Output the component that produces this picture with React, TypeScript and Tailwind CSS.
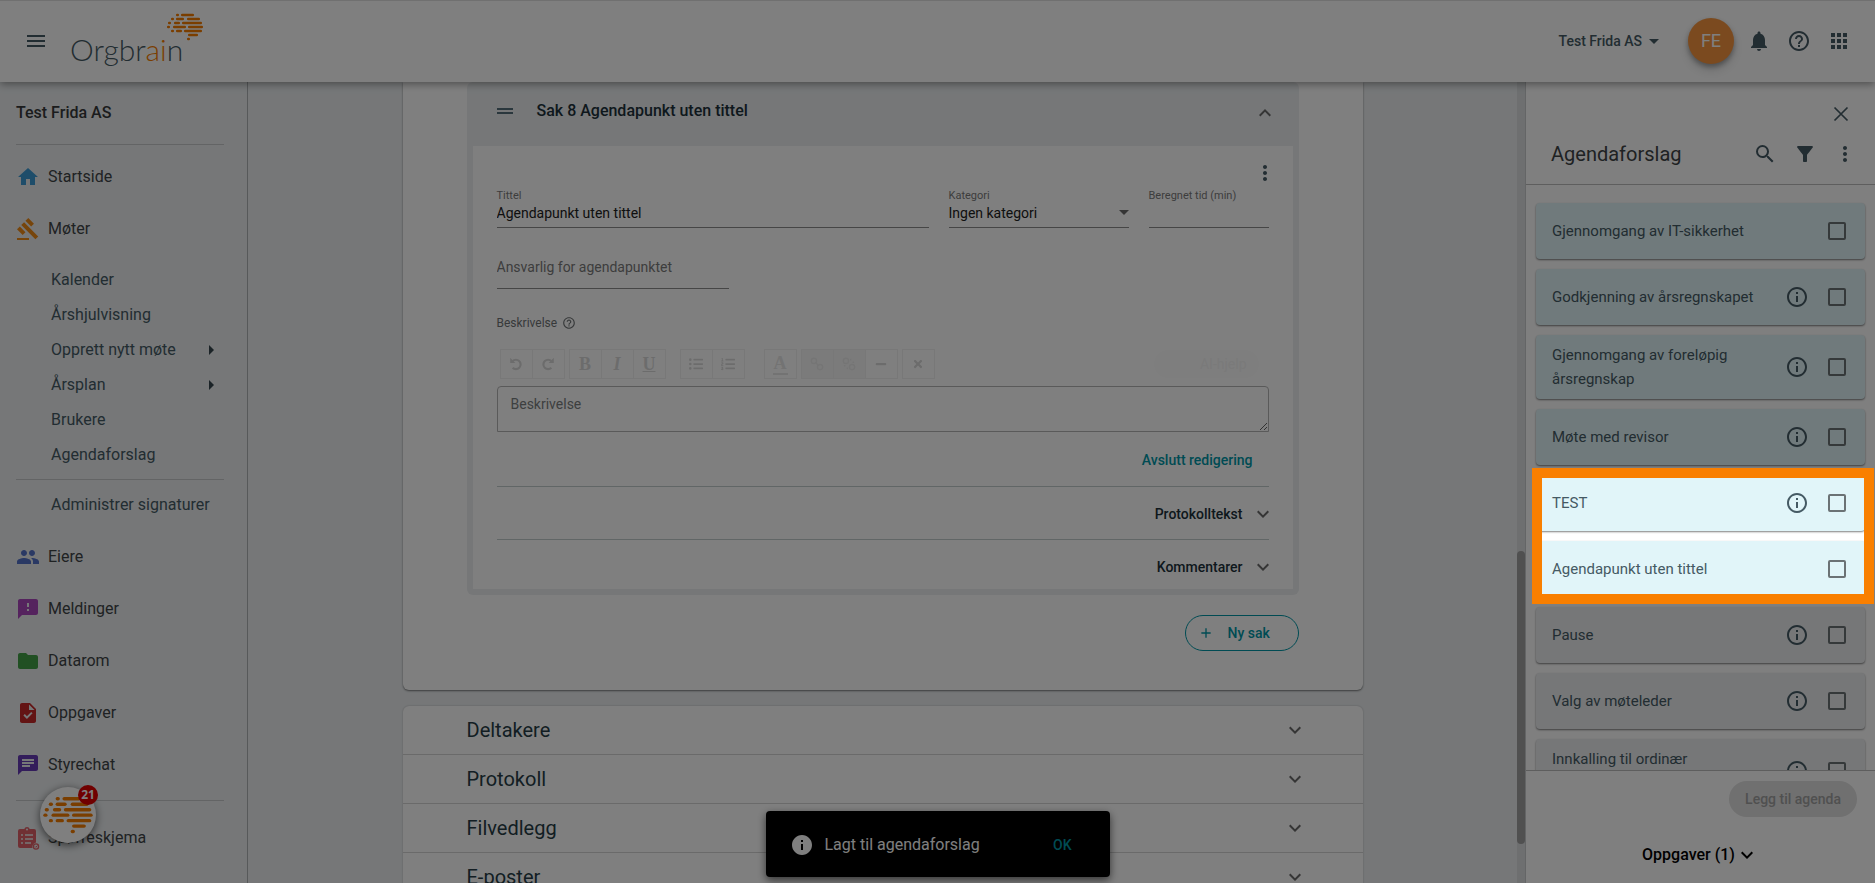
import type { ReactNode } from 'react';
import type { IconType } from 'react-icons';
import {
  MdAdd,
  MdApps,
  MdArrowDropDown,
  MdArrowRight,
  MdChat,
  MdDragHandle,
  MdExpandLess,
  MdExpandMore,
  MdFeedback,
  MdFilterAlt,
  MdFolder,
  MdGavel,
  MdHelpOutline,
  MdHome,
  MdInfo,
  MdInfoOutline,
  MdMenu,
  MdMoreVert,
  MdNotifications,
  MdPeople,
  MdSearch,
  MdTask,
} from 'react-icons/md';
import { FaListOl, FaListUl, FaMinus, FaTimes } from 'react-icons/fa';

const brainRows: [number, number, number][] = [
  [16, 176, 179], [16, 181, 194],
  [20, 171, 174], [20, 176, 184], [20, 187, 200],
  [24, 168, 171], [24, 174, 180], [24, 182, 202],
  [28, 167, 170], [28, 173, 186], [28, 188, 203],
  [32, 171, 174], [32, 176, 182], [32, 184, 202],
  [36, 188, 198],
  [40, 187, 190],
];

function Brain({ className }: { className: string }) {
  return (
    <svg viewBox="166 14 38 28" className={className} aria-hidden="true">
      {brainRows.map(([y, a, b]) => (
        <line key={`${y}-${a}`} x1={a + 1.2} x2={b - 1.2} y1={y} y2={y} stroke="#f57c00" strokeWidth="2.5" strokeLinecap="round" />
      ))}
    </svg>
  );
}

function SurveyIcon({ className }: { className: string }) {
  return (
    <svg viewBox="0 0 24 24" className={className} aria-hidden="true">
      <path fill="currentColor" d="M4 3h4.300a2.800 2.800 0 0 1 5.400 0H18a2 2 0 0 1 2 2v11.500a4.500 4.500 0 0 0-3.500 5.500H4a2 2 0 0 1-2-2V5a2 2 0 0 1 2-2z" />
      <circle cx="11" cy="3.500" r="1" fill="#eceff1" />
      <path stroke="#eceff1" strokeWidth="1.600" d="M5 9h2M9 9h8M5 13h2M9 13h8M5 17h2M9 17h6" />
      <circle cx="20" cy="20.500" r="2.600" fill="none" stroke="currentColor" strokeWidth="1.300" />
      <path d="M19 20.500l.8.8 1.500-1.600" fill="none" stroke="currentColor" strokeWidth="1" />
    </svg>
  );
}

function Turn({ flip }: { flip?: boolean }) {
  return (
    <svg viewBox="0 0 16 16" className={flip ? 'size-4 -scale-x-100' : 'size-4'} aria-hidden="true">
      <path d="M4.500 5.200A4.700 4.700 0 1 1 4.600 11.800" fill="none" stroke="currentColor" strokeWidth="2.200" />
      <path d="M2.200 1.800v5.200h5.200z" fill="currentColor" />
    </svg>
  );
}

function Chain({ broken }: { broken?: boolean }) {
  return (
    <svg viewBox="0 0 16 16" className="size-3.5" fill="none" stroke="currentColor" strokeWidth="1.600" aria-hidden="true">
      <circle cx="4.500" cy="4.500" r="3" />
      <circle cx="11.500" cy="11.500" r="3" />
      {broken ? <path d="M10 2v2M14 6h-2M2 10h2M6 14v-2" /> : <path d="M6 6l4 4" />}
    </svg>
  );
}

function NavItem({ icon, label }: { icon: ReactNode; label: string }) {
  return (
    <a href="#" className="flex h-13 shrink-0 items-center gap-2 text-[#3f4447]">
      {icon}
      {label}
    </a>
  );
}

function SubItem({ label, arrow }: { label: string; arrow?: boolean }) {
  return (
    <a href="#" className="flex h-[35px] shrink-0 items-center justify-between pr-px pl-[35px] text-[#455a64]">
      {label}
      {arrow && <MdArrowRight className="size-6 text-[#37474f]" />}
    </a>
  );
}

const nav: [IconType, string, string][] = [
  [MdPeople, 'Eiere', 'text-[#5472c9]'],
  [MdFeedback, 'Meldinger', 'text-[#ab47bc]'],
  [MdFolder, 'Datarom', 'text-[#43a047]'],
  [MdTask, 'Oppgaver', 'text-[#c62828]'],
  [MdChat, 'Styrechat', 'text-[#673ab7]'],
];

function Sidebar() {
  return (
    <nav className="flex w-62 shrink-0 flex-col overflow-hidden border-r border-[#aeb2b5] bg-[#eceff1] pr-[23px] pl-4">
      <div className="flex h-[62px] shrink-0 items-center text-base font-medium text-[#37393b]">Test Frida AS</div>
      <hr className="mb-1.5 border-[#c6c9cb]" />
      <NavItem icon={<MdHome className="size-6 text-[#3d9bd5]" />} label="Startside" />
      <NavItem icon={<MdGavel className="size-6 text-[#ef8a17]" />} label="Møter" />
      <div className="mt-[7px] flex shrink-0 flex-col">
        <SubItem label="Kalender" />
        <SubItem label="Årshjulvisning" />
        <SubItem label="Opprett nytt møte" arrow />
        <SubItem label="Årsplan" arrow />
        <SubItem label="Brukere" />
        <SubItem label="Agendaforslag" />
      </div>
      <hr className="my-[7px] border-[#c6c9cb]" />
      <SubItem label="Administrer signaturer" />
      <div className="mt-[9px] flex shrink-0 flex-col">
        {nav.map(([Icon, label, color]) => (
          <NavItem key={label} icon={<Icon className={`size-6 ${color}`} />} label={label} />
        ))}
      </div>
      <hr className="mt-[9px] mb-[11px] border-[#c6c9cb]" />
      <NavItem icon={<SurveyIcon className="size-6 text-[#e06068]" />} label="Spørreskjema" />
      <div className="mt-4 h-6 shrink-0">
        <MdHome className="size-6 text-[#26a0c0]" />
      </div>
    </nav>
  );
}

function Header() {
  return (
    <header className="z-10 flex h-[82px] shrink-0 items-center border-t border-[#e0e0e0] bg-white px-6 pb-0.5 shadow-[0_2px_8px_rgba(0,0,0,0.4)]">
      <button aria-label="Meny" className="text-[#455a64]">
        <MdMenu className="size-6" />
      </button>
      <a href="#" aria-label="Orgbrain" className="relative ml-[22px] pt-4 font-[Lato,sans-serif] text-[30px] leading-8 font-light text-[#455a64]">
        Orgbr<span className="text-[#f57c00]">ai</span>n
        <Brain className="absolute -top-1 left-24 w-[38px]" />
      </a>
      <div className="ml-auto flex items-center text-[#455a64]">
        <button className="mr-[22px] flex items-center text-sm font-medium">
          Test Frida AS
          <MdArrowDropDown className="size-6" />
        </button>
        <button className="mr-[13px] flex size-[46px] items-center justify-center rounded-full bg-[#f7953e] text-lg text-white shadow-[0_3px_5px_rgba(0,0,0,0.3),0_6px_12px_rgba(0,0,0,0.14)]">
          FE
        </button>
        <div className="flex gap-4">
          <button aria-label="Varsler"><MdNotifications className="size-6" /></button>
          <button aria-label="Hjelp"><MdHelpOutline className="size-6" /></button>
          <button aria-label="Apper"><MdApps className="size-6" /></button>
        </div>
      </div>
    </header>
  );
}

function Tool({ label, off, children }: { label: string; off?: boolean; children: ReactNode }) {
  return (
    <button aria-label={label} className={`-ml-px flex h-[30px] w-[33px] items-center justify-center border border-[#f0f0f0] ${off ? 'bg-[#f7f7f7] text-[#ebebeb]' : ''}`}>
      {children}
    </button>
  );
}

function Toolbar() {
  return (
    <div className="flex h-[30px] items-center pr-2.5 pl-1 font-['Liberation_Serif',serif] text-lg font-bold text-[#d9d9d9]">
      <Tool label="Angre"><Turn /></Tool>
      <Tool label="Gjør om"><Turn flip /></Tool>
      <div className="ml-[5px] flex">
        <Tool label="Fet">B</Tool>
        <Tool label="Kursiv"><i>I</i></Tool>
        <Tool label="Understreket"><u>U</u></Tool>
      </div>
      <div className="ml-[15px] flex">
        <Tool label="Punktliste"><FaListUl className="size-3.5" /></Tool>
        <Tool label="Nummerert liste"><FaListOl className="size-3.5" /></Tool>
      </div>
      <div className="ml-5 flex text-[#e6e6e6]">
        <Tool label="Tekstfarge"><span className="border-b-2 px-px leading-[20px]">A</span></Tool>
      </div>
      <div className="ml-[5px] flex">
        <Tool label="Lenke" off><Chain /></Tool>
        <Tool label="Fjern lenke" off><Chain broken /></Tool>
        <Tool label="Linje"><FaMinus className="size-3" /></Tool>
      </div>
      <div className="ml-[5px] flex">
        <Tool label="Fjern formatering"><FaTimes className="size-3" /></Tool>
      </div>
      <button className="ml-auto h-7 rounded-full bg-[#fdfdfd] pr-3 pl-[46px] font-[Roboto,sans-serif] text-sm font-normal text-[#f4f4f4]">AI-hjelp</button>
    </div>
  );
}

function Expand({ label }: { label: string }) {
  return (
    <button className="flex h-[50px] w-full items-center justify-end gap-2 border-t border-[#c3cdcc] pt-1 text-sm font-medium text-[#1c313a]">
      {label}
      <MdExpandMore className="-mr-1.5 size-6 text-[#6b6b6b]" />
    </button>
  );
}

function AgendaCard() {
  return (
    <section className="shrink-0 rounded-b-md bg-white px-16 pb-[39px] shadow-[0_1px_2px_rgba(0,0,0,0.5)]">
      <div className="rounded-md bg-[#eceff1] px-1.5 pb-1.5">
        <div className="flex h-16 items-center pr-4 pb-1.5 pl-5">
          <MdDragHandle className="size-6 text-[#546e7a]" />
          <h2 className="ml-5 text-base font-medium text-[#1c313a]">Sak 8 Agendapunkt uten tittel</h2>
          <button aria-label="Lukk sak" className="mt-1 ml-auto"><MdExpandLess className="size-6 text-[#6b6b6b]" /></button>
        </div>
        <div className="bg-white px-6 pt-[15px]">
          <div className="flex justify-end">
            <button aria-label="Flere valg" className="-mr-2"><MdMoreVert className="size-6 text-[#455a64]" /></button>
          </div>
          <div className="mt-[5px] flex gap-5 text-sm text-[#212121]">
            <label className="flex flex-1 flex-col">
              <span className="text-[11px] leading-3 text-[#7b7b7b]">Tittel</span>
              <input defaultValue="Agendapunkt uten tittel" className="h-[26px] w-full border-b border-[#8c8c8c] pb-[3px] outline-none" />
            </label>
            <label className="relative flex w-45 flex-col">
              <span className="text-[11px] leading-3 text-[#7b7b7b]">Kategori</span>
              <select className="h-[26px] w-full appearance-none border-b border-[#8c8c8c] pb-[3px] outline-none">
                <option>Ingen kategori</option>
              </select>
              <MdArrowDropDown className="absolute -right-[7px] bottom-1 size-6 text-[#6b6b6b]" />
            </label>
            <label className="flex w-30 flex-col">
              <span className="text-[11px] leading-3 text-[#7b7b7b]">Beregnet tid (min)</span>
              <input className="h-[26px] w-full border-b border-[#8c8c8c] outline-none" />
            </label>
          </div>
          <input aria-label="Ansvarlig for agendapunktet" placeholder="Ansvarlig for agendapunktet" className="mt-6 h-[37px] w-58 border-b border-[#8c8c8c] pb-1.5 text-sm outline-none placeholder:text-[#7b7b7b]" />
          <div className="mt-[26px] flex h-4 items-center gap-[5px] text-xs text-[#6f7375]">
            <label htmlFor="beskrivelse">Beskrivelse</label>
            <MdHelpOutline className="size-3.5" />
          </div>
          <div className="mt-[18px]">
            <Toolbar />
          </div>
          <textarea id="beskrivelse" placeholder="Beskrivelse" className="mt-[7px] block h-[46px] w-full resize-y rounded-t-sm border border-[#b5b5b5] px-[13px] pt-[7px] text-sm outline-none placeholder:text-[#7b7f81]" />
          <div className="flex h-[54px] items-center justify-end pt-0.5 pr-4">
            <button className="text-sm font-medium text-[#0097a7]">Avslutt redigering</button>
          </div>
          <div className="flex flex-col gap-[3px]">
            <Expand label="Protokolltekst" />
            <Expand label="Kommentarer" />
          </div>
        </div>
      </div>
      <div className="mt-5 flex justify-end">
        <button className="flex h-9 w-[114px] items-center gap-3.5 rounded-full border border-[#0097a7] pl-3 text-sm font-medium text-[#0097a7]">
          <MdAdd className="size-4" />
          Ny sak
        </button>
      </div>
    </section>
  );
}

function Main() {
  return (
    <main className="flex min-w-0 flex-1 bg-[#eceff1]">
      <div className="flex min-w-0 flex-1 flex-col items-center overflow-hidden">
        <div className="flex w-full max-w-240 flex-col gap-4">
          <AgendaCard />
          <section className="shrink-0 rounded-t-md bg-white shadow-[0_0_2px_rgba(0,0,0,0.25)]">
            {['Deltakere', 'Protokoll', 'Filvedlegg', 'E-poster'].map((label) => (
              <button key={label} className="flex h-[49px] w-full items-center justify-between border-b border-[#d4d4d4] pr-14 pl-16 text-xl text-[#263c46]">
                {label}
                <MdExpandMore className="size-6 text-[#6b6b6b]" />
              </button>
            ))}
          </section>
        </div>
      </div>
      <div className="flex w-2 flex-col bg-[#dcdfe1]">
        <div className="flex-[469]" />
        <div className="flex-[293] rounded bg-[#a0a0a0]" />
        <div className="flex-[39]" />
      </div>
    </main>
  );
}

const proposals = [
  { label: 'Gjennomgang av IT-sikkerhet', info: false, fresh: true },
  { label: 'Godkjenning av årsregnskapet', info: true, fresh: true },
  { label: 'Gjennomgang av foreløpig årsregnskap', info: true, fresh: true },
  { label: 'Møte med revisor', info: true, fresh: true },
  { label: 'TEST', info: true, fresh: true },
  { label: 'Agendapunkt uten tittel', info: false, fresh: true },
  { label: 'Pause', info: true, fresh: false },
  { label: 'Valg av møteleder', info: true, fresh: false },
  { label: 'Innkalling til ordinær generalforsamling', info: true, fresh: false },
];

function Proposals() {
  return (
    <aside className="flex w-[350px] shrink-0 flex-col border-l border-[#c8cbcd] bg-white">
      <div className="flex h-[103px] shrink-0 flex-col border-b border-[#bdbdbd] pr-[18px] pl-[25px] text-[#455a64]">
        <button aria-label="Lukk" className="mt-5 mr-1 self-end p-1">
          <svg viewBox="0 0 16 16" className="size-4" aria-hidden="true">
            <path d="M1.500 1.500l13 13M14.500 1.500l-13 13" stroke="currentColor" strokeWidth="1.700" />
          </svg>
        </button>
        <div className="mt-4 flex items-center">
          <h2 className="flex-1 text-xl leading-6 text-[#3f4447]">Agendaforslag</h2>
          <div className="flex gap-4">
            <button aria-label="Søk"><MdSearch className="size-6" /></button>
            <button aria-label="Filtrer"><MdFilterAlt className="size-6" /></button>
            <button aria-label="Flere valg"><MdMoreVert className="size-6" /></button>
          </div>
        </div>
      </div>
      <div className="flex min-h-0 flex-1 flex-col gap-2.5 overflow-hidden px-2.5 pt-[18px]">
        {proposals.map((p, i) => (
          <div key={p.label} className={`flex min-h-14 shrink-0 items-center rounded-sm py-2 pr-[19px] pl-4 text-[15px] leading-6 text-[#455a64] shadow-[0_1px_2px_rgba(0,0,0,0.5)] ${p.fresh ? 'bg-[#e1f5f9]' : 'bg-[#eceff1]'}`}>
            <label htmlFor={`p${i}`} className="w-[222px]">{p.label}</label>
            {p.info && (
              <button aria-label="Informasjon" className="ml-auto"><MdInfoOutline className="size-6" /></button>
            )}
            <input id={`p${i}`} type="checkbox" className={`size-[18px] shrink-0 appearance-none rounded-xs border-2 border-[#6b7275] ${p.info ? 'ml-[19px]' : 'ml-auto'}`} />
          </div>
        ))}
      </div>
      <div className="flex shrink-0 flex-col border-t border-[#bdbdbd] pt-2.5 pb-4">
        <button disabled className="mr-[18px] h-9 self-end rounded-full bg-[#e0e0e0] px-4 text-sm font-medium text-[#a0a0a0]">Legg til agenda</button>
        <button className="mt-[26px] flex items-center self-center text-base font-medium text-black">
          Oppgaver (1)
          <MdExpandMore className="size-6" />
        </button>
      </div>
    </aside>
  );
}

export default function App() {
  return (
    <div className="relative flex h-screen flex-col overflow-hidden bg-white font-[Roboto,sans-serif] text-base">
      <Header />
      <div className="flex min-h-0 flex-1">
        <Sidebar />
        <Main />
        <Proposals />
      </div>

      <button aria-label="Chat" className="absolute bottom-10 left-10 flex size-14 items-center justify-center rounded-full bg-white shadow-[0_2px_8px_rgba(0,0,0,0.6)]">
        <Brain className="w-[52px]" />
        <span className="absolute -top-0.5 -right-0.5 flex size-5 items-center justify-center rounded-full bg-[#e00000] font-['Open_Sans',sans-serif] text-xs font-bold text-white">21</span>
      </button>

      <div role="status" className="absolute bottom-1.5 left-1/2 flex h-[66px] w-86 -translate-x-1/2 items-center rounded bg-black pt-0.5 pr-[38px] pl-6 text-white shadow-[0_3px_8px_rgba(0,0,0,0.6)]">
        <MdInfo className="size-6" />
        <span className="ml-[11px]">Lagt til agendaforslag</span>
        <button className="ml-auto text-sm font-medium text-[#0097a7]">OK</button>
      </div>

      <div className="pointer-events-none absolute top-[468px] right-px z-20 h-34 w-[342px] border-10 border-[#f97f00] shadow-[0_0_0_3000px_rgba(0,0,0,0.5)]" />
    </div>
  );
}
